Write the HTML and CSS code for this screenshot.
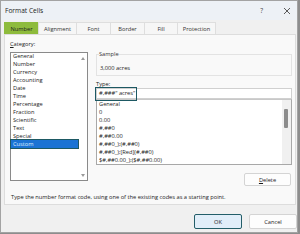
FILE: index.html
```html
<!DOCTYPE html>
<html lang="en">
<head>
    <meta charset="UTF-8">
    <title>Format Cells</title>
    <link rel="stylesheet" href="styles.css">
</head>
<body>
    <div class="window">
        <div class="titlebar">
            <span class="title">Format Cells</span>
            <span class="help">?</span>
            <svg class="close" width="8" height="8" viewBox="0 0 8 8"><path d="M1 1L7 7M7 1L1 7" stroke="#333" stroke-width="0.8"/></svg>
        </div>

        <div class="tabs">
            <div class="tab active">Number</div>
            <div class="tab w39">Alignment</div>
            <div class="tab">Font</div>
            <div class="tab">Border</div>
            <div class="tab w34">Fill</div>
            <div class="tab w39">Protection</div>
        </div>

        <div class="panel">
            <div class="columns">
                <!-- Category list -->
                <div class="left">
                    <div class="label"><u>C</u>ategory:</div>
                    <div class="listbox">
                        <ul class="items">
                            <li>General</li>
                            <li>Number</li>
                            <li>Currency</li>
                            <li>Accounting</li>
                            <li>Date</li>
                            <li>Time</li>
                            <li>Percentage</li>
                            <li>Fraction</li>
                            <li>Scientific</li>
                            <li>Text</li>
                            <li>Special</li>
                            <li class="selected">Custom</li>
                        </ul>
                        <div class="arrows">
                            <span class="arrow up"></span>
                            <span class="arrow down"></span>
                        </div>
                    </div>
                </div>

                <!-- Sample, type and codes -->
                <div class="right">
                    <fieldset class="sample">
                        <legend>Sample</legend>
                        <div class="sample-value">3,000 acres</div>
                    </fieldset>
                    <div class="label type-label"><u>T</u>ype:</div>
                    <div class="type-input">
                        #,###" acres"
                        <span class="callout"></span>
                    </div>
                    <div class="codes">
                        <ul class="items">
                            <li>General</li>
                            <li>0</li>
                            <li>0.00</li>
                            <li>#,##0</li>
                            <li>#,##0.00</li>
                            <li>#,##0_);(#,##0)</li>
                            <li>#,##0_);[Red](#,##0)</li>
                            <li>$#,##0.00_);($#,##0.00)</li>
                        </ul>
                        <div class="scroll"><div class="thumb"></div></div>
                    </div>
                    <div class="delete-row">
                        <button class="btn delete"><u>D</u>elete</button>
                    </div>
                </div>
            </div>
            <p class="hint">Type the number format code, using one of the existing codes as a starting point.</p>
        </div>

        <div class="footer">
            <button class="btn ok">OK</button>
            <button class="btn cancel">Cancel</button>
        </div>
    </div>
</body>
</html>
```

FILE: styles.css
```css
/* Page */
html, body {
    margin: 0;
    padding: 0;
    height: 100%;
    overflow: hidden;
}
body {
    background: #8d8d8d;
    font-family: "Open Sans", "Noto Sans", sans-serif;
    font-size: 5.7px;
    color: #1c1c1c;
}

/* Dialog window */
.window {
    width: 296px;
    height: 231px;
    border: 1px solid #a3a3a3;
    background: #f0f0f0;
    display: flex;
    flex-direction: column;
}
.titlebar {
    height: 19px;
    background: #edf1f6;
    display: flex;
    align-items: center;
    padding: 0 6px 0 4px;
}
.title {
    font-size: 6.6px;
    flex: 1;
}
.help {
    font-size: 6.6px;
    margin-right: 20px;
    color: #444;
}
.close {
    display: block;
}

/* Tabs */
.tabs {
    display: flex;
    margin: 2px 0 0 3px;
    height: 12px;
}
.tab {
    width: 35px;
    box-sizing: border-box;
    border: 1px solid #dedede;
    border-bottom: none;
    margin-right: -1px;
    background: #f6f6f6;
    display: flex;
    align-items: center;
    justify-content: center;
    color: #333;
}
.tab.w39 { width: 39px; }
.tab.w34 { width: 34px; }
.tab.active {
    background: #8ebb3c;
    border-color: #8ebb3c;
    color: #1c1c1c;
}

/* Content panel */
.panel {
    margin: 0 1px 0 3px;
    height: 171px;
    box-sizing: border-box;
    border: 1px solid #dddddd;
    background: #f9f9f9;
    padding: 5px 3px 0 5px;
}
.columns {
    display: flex;
    gap: 8px;
    height: 146px;
}
.label {
    line-height: 8px;
    height: 8px;
}
.items {
    list-style: none;
    margin: 0;
    padding: 0;
    flex: 1;
}
.items li {
    line-height: 8px;
    height: 8px;
    padding-left: 2px;
    white-space: nowrap;
}

/* Category list */
.left {
    width: 78px;
}
.listbox {
    margin-top: 4px;
    height: 129px;
    box-sizing: border-box;
    border: 1px solid #8a8a8a;
    background: #fff;
    display: flex;
}
.listbox .items li:first-child {
    margin-top: -1px;
}
.items li.selected {
    background: #1a73d4;
    color: #dfeeff;
    outline: 1.5px solid #1d5963;
    outline-offset: 0;
}
.arrows {
    width: 9px;
    display: flex;
    flex-direction: column;
    justify-content: space-between;
    align-items: center;
    padding: 4px 0 3px;
}
.arrow {
    width: 0;
    height: 0;
    border-left: 2px solid transparent;
    border-right: 2px solid transparent;
}
.arrow.up { border-bottom: 3px solid #9a9a9a; }
.arrow.down { border-top: 3px solid #9a9a9a; }

/* Right column */
.right {
    flex: 1;
}
.sample {
    margin: 10px 0 0;
    padding: 6px 3px 3px;
    border: 1px solid #e3e3e3;
    min-width: 0;
}
.sample legend {
    padding: 0;
    margin-left: -1px;
    line-height: 8px;
    color: #333;
}
.sample-value {
    line-height: 8px;
}
.type-label {
    margin-top: 4px;
}
.type-input {
    position: relative;
    height: 11px;
    box-sizing: border-box;
    border: 1px solid #d0d0d0;
    background: #fff;
    line-height: 9px;
    padding-left: 2px;
}
.callout {
    position: absolute;
    left: -2px;
    top: -2px;
    width: 40px;
    height: 12px;
    border: 1.5px solid #1d5963;
}
.codes {
    height: 66px;
    box-sizing: border-box;
    border: 1px solid #a8a8a8;
    border-top-color: #c8c8c8;
    background: #fff;
    display: flex;
    overflow: hidden;
}
.codes .items li:first-child {
    margin-top: 0;
}
.scroll {
    width: 9px;
    background: #f0f0f0;
    padding-top: 9px;
}
.thumb {
    width: 4px;
    height: 19px;
    margin-left: 2px;
    background: #8c8c8c;
    border-radius: 1px;
}
.delete-row {
    display: flex;
    justify-content: flex-end;
    margin-top: 8px;
    padding-right: 1px;
}

/* Buttons */
.btn {
    font-family: inherit;
    font-size: 5.7px;
    color: #1c1c1c;
    background: #fdfdfd;
    border: 1px solid #d4d4d4;
    border-radius: 2px;
    padding: 0;
    margin: 0;
}
.delete {
    width: 47px;
    height: 13px;
}
.hint {
    margin: 7px 0 0 1px;
    line-height: 8px;
    white-space: nowrap;
}
.footer {
    display: flex;
    justify-content: flex-end;
    gap: 7px;
    padding: 9px 0 0;
}
.ok, .cancel {
    width: 48px;
    height: 15px;
}
.ok {
    background: #e1eef9;
    border: 1.5px solid #235e69;
}
```
